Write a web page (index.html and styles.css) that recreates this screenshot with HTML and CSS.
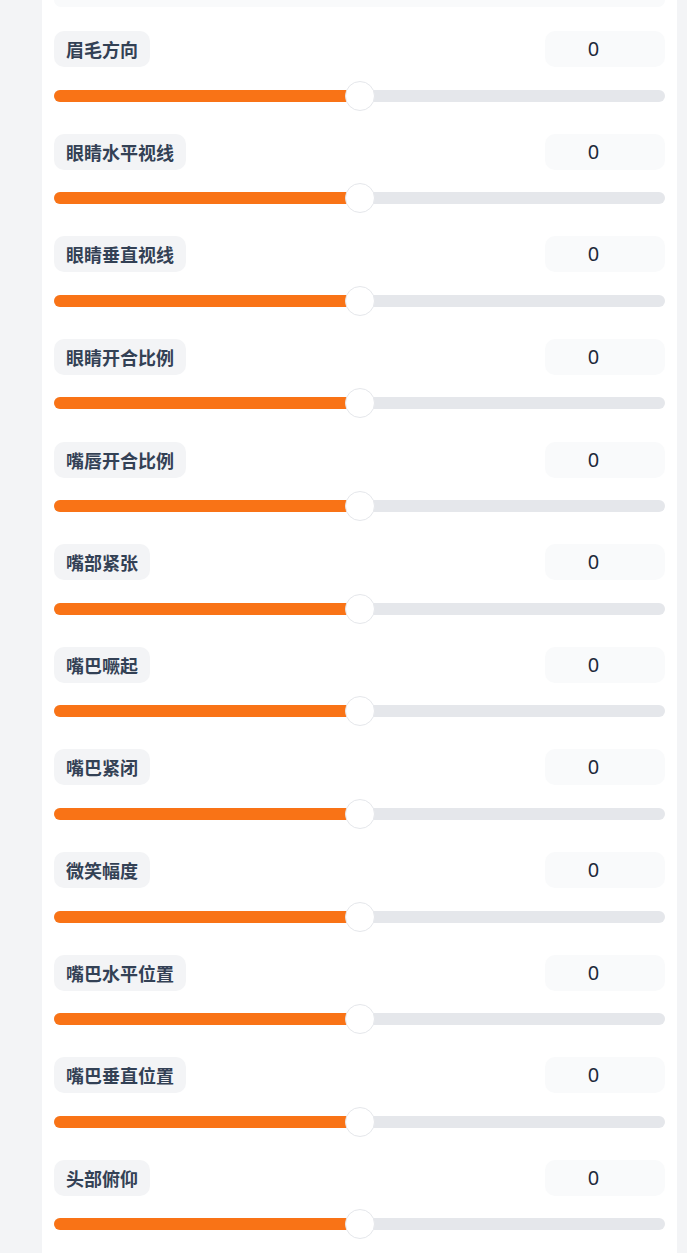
FILE: index.html
```html
<!DOCTYPE html>
<html lang="zh-CN">
<head>
    <meta charset="UTF-8">
    <meta name="viewport" content="width=device-width, initial-scale=1.0">
    <title>表情参数</title>
    <link rel="stylesheet" href="styles.css">
</head>
<body>
    <div class="panel">
        <div class="prev-box"></div>

        <div class="params" id="params"></div>
    </div>

    <script>
        const names = [
            '眉毛方向', '眼睛水平视线', '眼睛垂直视线', '眼睛开合比例',
            '嘴唇开合比例', '嘴部紧张', '嘴巴噘起', '嘴巴紧闭',
            '微笑幅度', '嘴巴水平位置', '嘴巴垂直位置', '头部俯仰'
        ];
        const params = document.getElementById('params');

        names.forEach((name) => {
            const row = document.createElement('div');
            row.className = 'param';
            row.innerHTML = `
                <div class="param-head">
                    <span class="param-label">${name}</span>
                    <div class="param-value">0</div>
                </div>
                <div class="slider">
                    <div class="track">
                        <div class="fill" style="width: 50%"></div>
                    </div>
                    <div class="thumb" style="left: 50%"></div>
                </div>
            `;
            params.appendChild(row);
        });
    </script>
</body>
</html>
```

FILE: styles.css
```css
body {
    margin: 0;
    padding: 0 10px 0 42px;
    background-color: #f3f4f6;
    font-family: "Noto Sans", "Noto Sans CJK SC", sans-serif;
}

.panel {
    background-color: #fff;
    padding: 0 12px;
    min-height: 1253px;
}

.prev-box {
    height: 6.5px;
    background-color: #f9fafb;
    border-radius: 0 0 10px 10px;
}

.params {
    display: flex;
    flex-direction: column;
    gap: 23.14px;
    padding-top: 24.5px;
}

.param {
    display: flex;
    flex-direction: column;
    gap: 13.5px;
}

.param-head {
    display: flex;
    justify-content: space-between;
    align-items: center;
    height: 36px;
}

.param-label {
    background-color: #f3f4f6;
    color: #334155;
    font-family: "Noto Sans CJK SC", sans-serif;
    font-size: 18px;
    font-weight: 700;
    line-height: 24px;
    padding: 6px 12px;
    border-radius: 10px;
}

.param-value {
    width: 97px;
    height: 36px;
    padding-right: 23px;
    background-color: #f9fafb;
    border-radius: 10px;
    color: #1e293b;
    font-size: 20px;
    line-height: 36px;
    text-align: center;
}

.slider {
    position: relative;
    height: 30px;
    display: flex;
    align-items: center;
}

.track {
    width: 100%;
    height: 12px;
    background-color: #e5e7eb;
    border-radius: 6px;
    overflow: hidden;
}

.fill {
    height: 100%;
    background-color: #f97316;
}

.thumb {
    position: absolute;
    top: 0;
    width: 30px;
    height: 30px;
    box-sizing: border-box;
    margin-left: -15px;
    background-color: #fff;
    border: 1px solid #e5e7eb;
    border-radius: 50%;
}
```
